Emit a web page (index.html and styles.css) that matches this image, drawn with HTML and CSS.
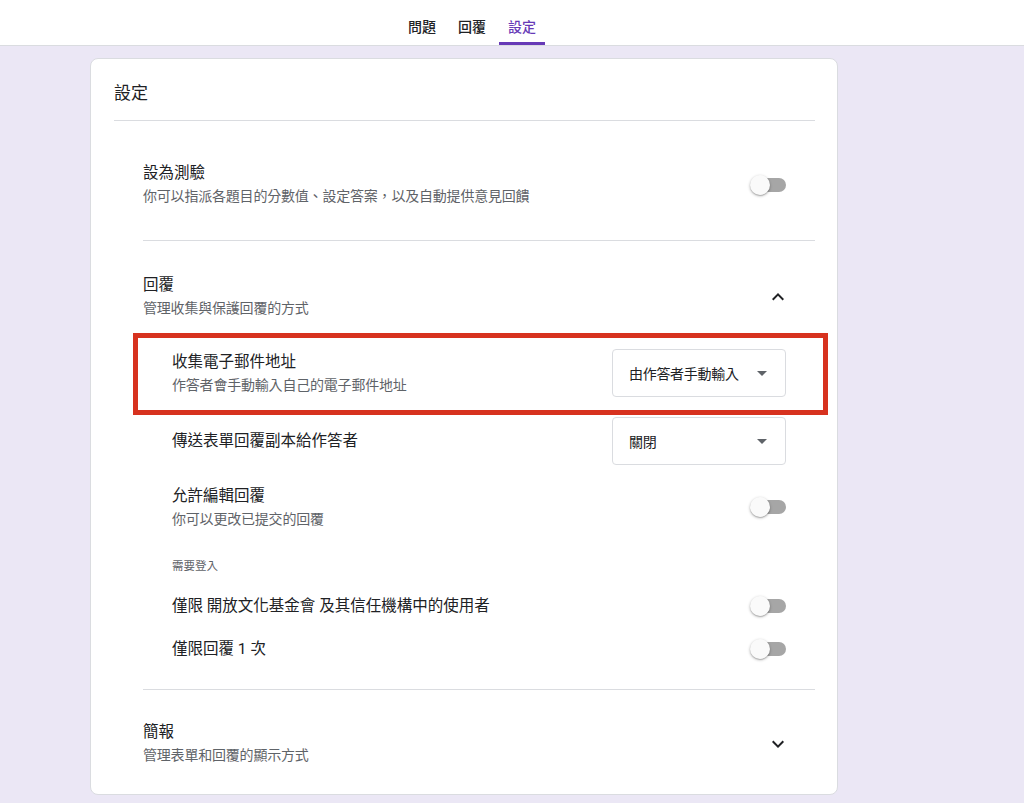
FILE: index.html
```html
<!DOCTYPE html>
<html lang="zh-Hant">
<head>
<meta charset="utf-8">
<title>設定</title>
<link rel="stylesheet" href="styles.css">
</head>
<body>
<header class="topbar">
  <nav class="tabs">
    <div class="tab">問題</div>
    <div class="tab">回覆</div>
    <div class="tab active">設定</div>
  </nav>
</header>

<main class="card">
  <div class="card-title">設定</div>

  <section class="section s-quiz">
    <div class="row">
      <div class="text">
        <div class="title">設為測驗</div>
        <div class="desc">你可以指派各題目的分數值、設定答案，以及自動提供意見回饋</div>
      </div>
      <div class="switch"><span class="track"></span><span class="thumb"></span></div>
    </div>
  </section>

  <section class="section s-responses">
    <div class="row">
      <div class="text">
        <div class="title">回覆</div>
        <div class="desc">管理收集與保護回覆的方式</div>
      </div>
      <svg class="chev" viewBox="0 0 24 24" width="24" height="24"><path d="M12 8l-6 6 1.41 1.41L12 10.83l4.59 4.58L18 14z"/></svg>
    </div>

    <div class="subrows">
      <div class="subrow r1">
        <div class="text">
          <div class="title">收集電子郵件地址</div>
          <div class="desc">作答者會手動輸入自己的電子郵件地址</div>
        </div>
        <div class="select"><span>由作答者手動輸入</span><i class="caret"></i></div>
        <div class="highlight"></div>
      </div>
      <div class="subrow r2">
        <div class="text">
          <div class="title">傳送表單回覆副本給作答者</div>
        </div>
        <div class="select"><span>關閉</span><i class="caret"></i></div>
      </div>
      <div class="subrow r3">
        <div class="text">
          <div class="title">允許編輯回覆</div>
          <div class="desc">你可以更改已提交的回覆</div>
        </div>
        <div class="switch"><span class="track"></span><span class="thumb"></span></div>
      </div>
      <div class="label">需要登入</div>
      <div class="subrow r4">
        <div class="text">
          <div class="title">僅限 開放文化基金會 及其信任機構中的使用者</div>
        </div>
        <div class="switch"><span class="track"></span><span class="thumb"></span></div>
      </div>
      <div class="subrow r5">
        <div class="text">
          <div class="title">僅限回覆 1 次</div>
        </div>
        <div class="switch"><span class="track"></span><span class="thumb"></span></div>
      </div>
    </div>
  </section>

  <section class="section s-present">
    <div class="row">
      <div class="text">
        <div class="title">簡報</div>
        <div class="desc">管理表單和回覆的顯示方式</div>
      </div>
      <svg class="chev" viewBox="0 0 24 24" width="24" height="24"><path d="M16.59 8.59L12 13.17 7.41 8.59 6 10l6 6 6-6z"/></svg>
    </div>
  </section>
</main>
</body>
</html>
```

FILE: styles.css
```css
* { box-sizing: border-box; }

html, body {
  margin: 0;
  padding: 0;
}

body {
  background: #ebe7f5;
  font-family: Roboto, "Noto Sans CJK TC", "Noto Sans", sans-serif;
  color: #202124;
  height: 803px;
  overflow: hidden;
}

.topbar {
  background: #fff;
  height: 46px;
  border-bottom: 1px solid #dadce0;
}

.tabs {
  display: flex;
  gap: 4px;
  padding-left: 399px;
}

.tab {
  height: 45px;
  padding: 17px 9px 0;
  font-size: 14px;
  line-height: 20px;
  font-weight: 500;
  color: #202124;
  border-bottom: 3px solid transparent;
}

.tab.active {
  color: #673ab7;
  border-bottom-color: #673ab7;
}

.card {
  margin: 12px 0 0 90px;
  width: 748px;
  background: #fff;
  border: 1px solid #dadce0;
  border-radius: 8px;
  padding: 0 22px 0 23px;
}

.card-title {
  padding: 22px 0 15px;
  font-size: 17px;
  line-height: 24px;
  border-bottom: 1px solid #dadce0;
}

.section {
  margin-left: 29px;
  padding-right: 29px;
}

.s-quiz {
  padding-top: 41px;
  padding-bottom: 33px;
  border-bottom: 1px solid #dadce0;
}

.s-responses {
  padding-top: 33px;
  padding-bottom: 22px;
  border-bottom: 1px solid #dadce0;
}

.s-present {
  padding-top: 31px;
  padding-bottom: 28px;
}

.row, .subrow {
  display: flex;
  align-items: center;
  justify-content: space-between;
}

.title {
  font-size: 15.5px;
  line-height: 22px;
  color: #202124;
}

.desc {
  font-size: 14px;
  line-height: 22px;
  letter-spacing: -0.2px;
  margin-top: 1px;
  color: #5f6368;
}

.chev {
  fill: #202124;
  margin-right: -4px;
  flex: none;
}

.subrows {
  margin-top: 30px;
  padding-left: 29px;
}

.subrow {
  height: 48px;
  position: relative;
}

.r2 { margin-top: 20px; }
.r3 { margin-top: 18px; }
.r4 { margin-top: 14px; height: 36px; }
.r5 { margin-top: 7px; height: 36px; }

.label {
  margin-top: 27px;
  font-size: 11.5px;
  line-height: 16px;
  color: #5f6368;
}

.select {
  width: 174px;
  height: 48px;
  flex: none;
  border: 1px solid #dadce0;
  border-radius: 4px;
  display: flex;
  align-items: center;
  justify-content: space-between;
  padding: 0 18px 0 16px;
  font-size: 14px;
  letter-spacing: -0.3px;
  color: #202124;
}

.caret {
  width: 0;
  height: 0;
  border-left: 5px solid transparent;
  border-right: 5px solid transparent;
  border-top: 5px solid #5f6368;
}

.highlight {
  position: absolute;
  left: -39px;
  right: -42px;
  top: -16px;
  bottom: -18px;
  border: 5px solid #d7321f;
  pointer-events: none;
}

.switch {
  position: relative;
  width: 36px;
  height: 20px;
  flex: none;
}

.switch .track {
  position: absolute;
  left: 2px;
  right: 0;
  top: 3px;
  height: 14px;
  border-radius: 7px;
  background: #a6a6a6;
}

.switch .thumb {
  position: absolute;
  left: 0;
  top: 0;
  width: 20px;
  height: 20px;
  border-radius: 50%;
  background: #fafafa;
  box-shadow: 0 1px 3px rgba(0,0,0,0.3), 0 1px 1px rgba(0,0,0,0.14);
}
```
